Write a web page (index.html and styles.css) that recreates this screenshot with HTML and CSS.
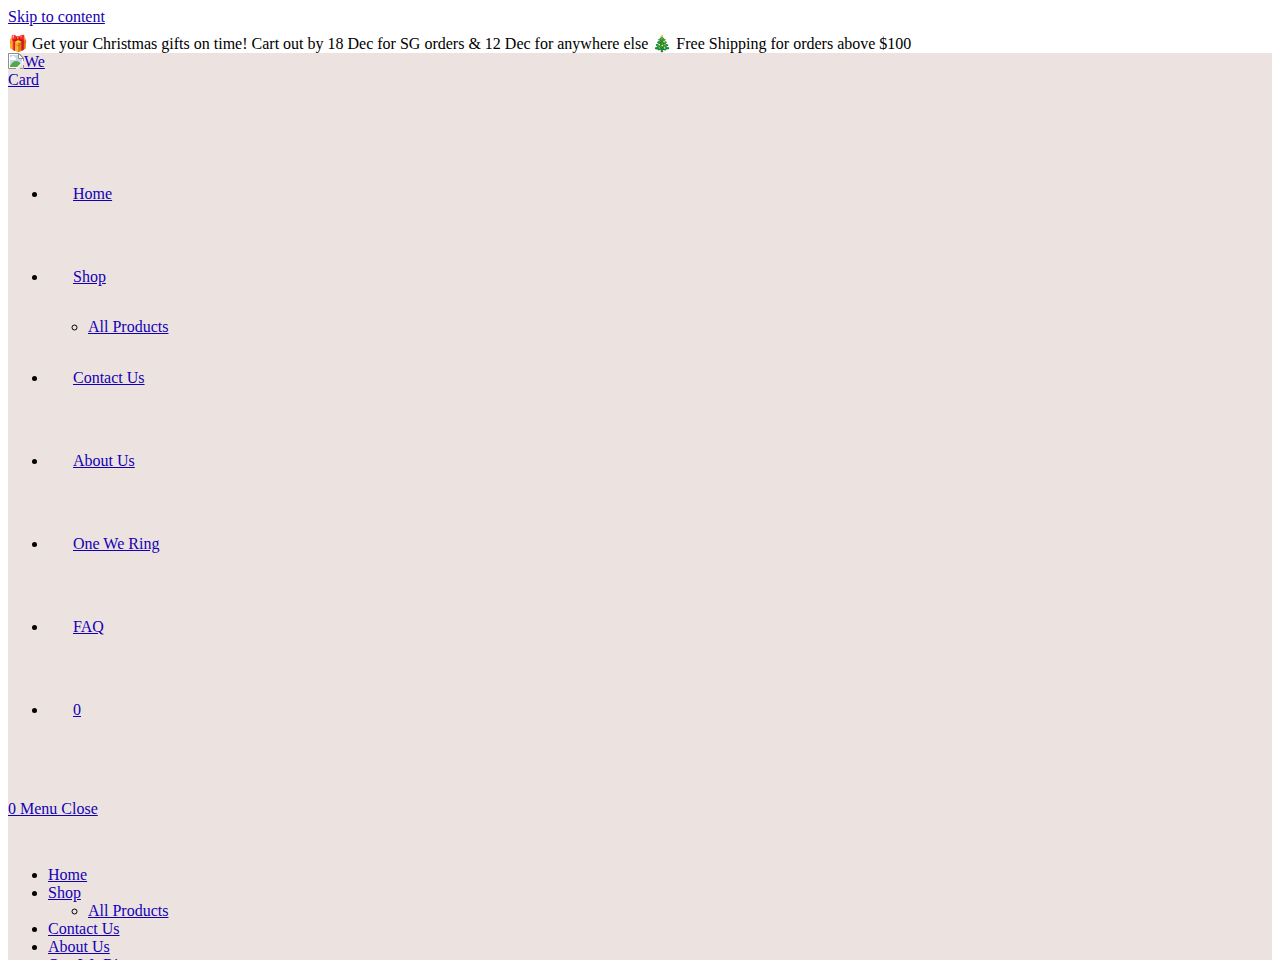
FILE: index.html
```html
<!DOCTYPE html>
<html lang="en">
<head>
    <meta charset="UTF-8">
    <meta name="viewport" content="width=device-width, initial-scale=1.0">
    <title>We Card</title>
    <link rel="stylesheet" href="styles.css">
</head>
<body>
    <a class="skip-link" href="#content">Skip to content</a>

    <div class="top-bar">🎁 Get your Christmas gifts on time! Cart out by 18 Dec for SG orders &amp; 12 Dec for anywhere else 🎄 Free Shipping for orders above $100</div>

    <header class="site-header">
        <div class="logo">
            <a href="#"><svg class="logo-icon" width="16" height="16" viewBox="0 0 16 16" aria-hidden="true">
                <path d="M0.5 0.5H11L15.5 5V9L9 15.5H0.5Z" fill="#fff"/>
                <path d="M2 2H10V6H14V9L9 14H2Z" fill="#c3d8f6"/>
                <path d="M3 7a1.500 1.500 0 0 1 .3-3a2 2 0 0 1 3.700.5a1.300 1.300 0 0 1 .3 2.500Z" fill="#fff"/>
                <path d="M2 14V13C3.500 10 5.500 8 8 8C10 8 11.500 9 12.500 10.500L9 14Z" fill="#55a845"/>
                <path d="M8 15.500H0.500V0.500H11L15.500 5V8M15.500 12V15.500H12" fill="none" stroke="#8f8f8f"/>
                <path d="M10.500 0.500V5.500H15.500Z" fill="#fff" stroke="#8f8f8f"/>
            </svg>We Card</a>
        </div>

        <nav class="main-nav">
            <ul>
                <li><a href="#">Home</a></li>
                <li><a href="#">Shop</a>
                    <ul class="sub-menu">
                        <li><a href="#">All Products</a></li>
                    </ul>
                </li>
                <li><a href="#">Contact Us</a></li>
                <li><a href="#">About Us</a></li>
                <li><a href="#">One We Ring</a></li>
                <li><a href="#">FAQ</a></li>
                <li><a href="#">0</a></li>
            </ul>
        </nav>

        <div class="mobile-icons">
            <a href="#">0 </a><a href="#mobile-menu">Menu Close</a>
        </div>

        <nav class="mobile-nav" id="mobile-menu">
            <ul>
                <li><a href="#">Home</a></li>
                <li><a href="#">Shop</a>
                    <ul>
                        <li><a href="#">All Products</a></li>
                    </ul>
                </li>
                <li><a href="#">Contact Us</a></li>
                <li><a href="#">About Us</a></li>
                <li><a href="#">One We Ring</a></li>
                <li><a href="#">FAQ</a></li>
            </ul>
        </nav>
    </header>

    <main id="content"></main>
</body>
</html>
```

FILE: styles.css
```css
body {
    margin: 8px;
    font-family: "Liberation Serif", "Times New Roman", serif;
    font-size: 16px;
    line-height: 18px;
    color: #000;
    background-color: #fff;
}

a { color: #1400b4; }

.skip-link { display: block; }

.top-bar { padding-top: 9px; }

.site-header { background-color: #ece3e0; }

/* logo */
.logo { min-height: 83px; }
.logo a { display: block; width: 45px; }
.logo-icon { vertical-align: top; }

/* desktop menu */
.main-nav > ul { margin: 16px 0; }
.main-nav > ul > li { line-height: 83px; }
.main-nav > ul > li > a { padding: 0 25px; }
.main-nav .sub-menu { line-height: 18px; }

/* mobile menu */
.mobile-icons { line-height: 83px; }
.mobile-nav > ul { margin: 16px 0; }
```
